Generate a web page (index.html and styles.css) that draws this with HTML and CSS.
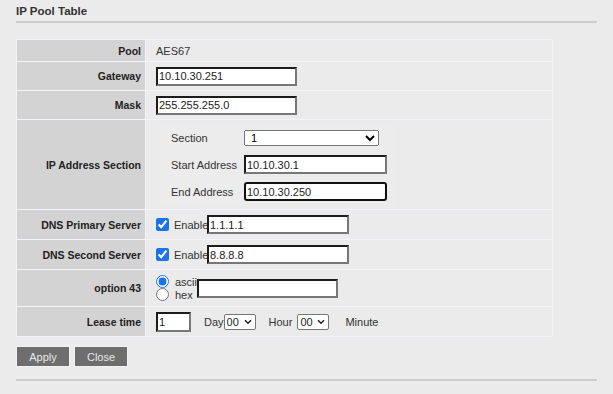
FILE: index.html
```html
<!DOCTYPE html>
<html lang="en">
<head>
  <meta charset="UTF-8">
  <title>IP Pool Table</title>
  <link rel="stylesheet" href="styles.css">
</head>
<body>
  <div class="page">
    <h1 class="title">IP Pool Table</h1>

    <table class="pool-table">
      <tr class="row-pool">
        <td class="label">Pool</td>
        <td class="value">AES67</td>
      </tr>
      <tr class="row-field">
        <td class="label">Gateway</td>
        <td class="value"><input type="text" class="field field-wide" value="10.10.30.251"></td>
      </tr>
      <tr class="row-field">
        <td class="label">Mask</td>
        <td class="value"><input type="text" class="field field-wide" value="255.255.255.0"></td>
      </tr>
      <tr class="row-section">
        <td class="label">IP Address Section</td>
        <td class="value value-nested">
          <table class="section-table">
            <tr>
              <td class="sub-label">Section</td>
              <td class="sub-value">
                <select class="section-select">
                  <option>1</option>
                  <option>2</option>
                  <option>3</option>
                </select>
              </td>
            </tr>
            <tr>
              <td class="sub-label">Start Address</td>
              <td class="sub-value"><input type="text" class="field field-section" value="10.10.30.1"></td>
            </tr>
            <tr>
              <td class="sub-label">End Address</td>
              <td class="sub-value"><input type="text" class="field field-section focused" value="10.10.30.250"></td>
            </tr>
          </table>
        </td>
      </tr>
      <tr class="row-dns">
        <td class="label">DNS Primary Server</td>
        <td class="value">
          <div class="inline">
            <input type="checkbox" class="check" checked>
            <span class="enable">Enable</span><input type="text" class="field field-dns" value="1.1.1.1">
          </div>
        </td>
      </tr>
      <tr class="row-dns">
        <td class="label">DNS Second Server</td>
        <td class="value">
          <div class="inline">
            <input type="checkbox" class="check" checked>
            <span class="enable">Enable</span><input type="text" class="field field-dns" value="8.8.8.8">
          </div>
        </td>
      </tr>
      <tr class="row-option">
        <td class="label">option 43</td>
        <td class="value">
          <div class="inline">
            <div class="radios">
              <label class="radio-line"><input type="radio" name="opt43" class="radio" checked>ascii</label>
              <label class="radio-line"><input type="radio" name="opt43" class="radio">hex</label>
            </div>
            <input type="text" class="field field-option" value="">
          </div>
        </td>
      </tr>
      <tr class="row-lease">
        <td class="label">Lease time</td>
        <td class="value">
          <div class="inline">
            <input type="text" class="field field-lease" value="1">
            <span class="unit unit-day">Day</span>
            <span class="select-wrap">
              <select class="small-select"><option>00</option><option>01</option></select>
              <svg class="chevron" width="8" height="6" viewBox="0 0 8 6"><path d="M1 1.2 L4 4.2 L7 1.2" fill="none" stroke="#222" stroke-width="1.6"/></svg>
            </span>
            <span class="unit unit-hour">Hour</span>
            <span class="select-wrap">
              <select class="small-select"><option>00</option><option>01</option></select>
              <svg class="chevron" width="8" height="6" viewBox="0 0 8 6"><path d="M1 1.2 L4 4.2 L7 1.2" fill="none" stroke="#222" stroke-width="1.6"/></svg>
            </span>
            <span class="unit unit-minute">Minute</span>
          </div>
        </td>
      </tr>
    </table>

    <div class="buttons">
      <button class="btn">Apply</button>
      <button class="btn">Close</button>
    </div>

    <div class="footer-line"></div>
  </div>
</body>
</html>
```

FILE: styles.css
```css
html, body {
  margin: 0;
  padding: 0;
  background: #ebebeb;
}

body {
  font-family: "Liberation Sans", Arial, sans-serif;
  font-size: 11px;
  color: #333;
}

.page {
  width: 581px;
  margin-left: 16px;
}

.title {
  margin: 0;
  padding: 4px 0 3px;
  font-size: 11.5px;
  line-height: 14px;
  font-weight: bold;
  color: #333;
  border-bottom: 2px solid #cdcdcd;
}

.pool-table {
  margin-top: 16px;
  width: 537px;
  border-collapse: separate;
  border-spacing: 1px;
  background: #f3f3f9;
}

.pool-table td {
  padding: 0;
}

.label {
  width: 124px;
  background: #d3d3d3;
  font-weight: bold;
  font-size: 10.5px;
  color: #222;
  text-align: right;
  padding-right: 4px !important;
}

.value {
  background: #ebebeb;
  padding: 0 10px !important;
}

.row-pool td { height: 21px; }
.row-field td { height: 28px; }
.row-section td { height: 89px; }
.row-dns td { height: 29px; }
.row-option td { height: 36px; }
.row-lease td { height: 29px; }

.value-nested {
  padding: 0 0 0 14px !important;
}

.field {
  box-sizing: border-box;
  height: 19px;
  padding: 0 1px;
  font-family: "Liberation Sans", Arial, sans-serif;
  font-size: 11px;
  color: #222;
  background: #fff;
  border-width: 2px;
  border-style: solid;
  border-color: #1c1c1c #777 #777 #1c1c1c;
  border-radius: 0;
  outline: none;
}

.field-wide {
  width: 141px;
}

.field-section {
  width: 143px;
}

.field.focused {
  border-color: #111;
  border-radius: 3px;
}

.field-dns {
  width: 142px;
}

.field-option {
  width: 141px;
}

.field-lease {
  width: 35px;
  height: 20px;
}

.section-table {
  border-collapse: separate;
  border-spacing: 0;
  width: 236px;
  background: #ececec;
}

.pool-table .section-table td {
  padding: 0;
  height: 27px;
}

.pool-table .section-table .sub-label {
  width: 73px;
  padding-left: 11px;
  color: #333;
}

.section-select {
  width: 135px;
  height: 16px;
  font-family: "Liberation Sans", Arial, sans-serif;
  font-size: 11px;
  padding: 0 2px;
}

.select-wrap {
  position: relative;
  display: inline-flex;
}

.small-select {
  appearance: none;
  -webkit-appearance: none;
  box-sizing: border-box;
  width: 32px;
  height: 16px;
  padding: 0 0 0 2px;
  font-family: "Liberation Sans", Arial, sans-serif;
  font-size: 11px;
  color: #222;
  background: #fff;
  border: 1px solid #767676;
  border-radius: 2px;
}

.chevron {
  position: absolute;
  right: 4px;
  top: 5px;
  pointer-events: none;
}

.inline {
  display: flex;
  align-items: center;
}

.check {
  width: 13px;
  height: 13px;
  margin: 0 5px 0 0;
  accent-color: #1a73e8;
}

.enable {
  color: #333;
  width: 33px;
  white-space: nowrap;
}

.radios {
  width: 41px;
  display: flex;
  flex-direction: column;
  white-space: nowrap;
}

.radio-line {
  display: flex;
  align-items: center;
  height: 13px;
  color: #333;
}

.radio {
  width: 13px;
  height: 13px;
  margin: 0 6px 0 0;
  accent-color: #1a73e8;
}

.unit {
  color: #333;
}

.unit-day {
  margin-left: 13px;
}

.unit-hour {
  margin-left: 13px;
  margin-right: 5px;
}

.unit-minute {
  margin-left: 16px;
}

.buttons {
  margin-top: 9px;
  display: flex;
  gap: 4px;
}

.btn {
  width: 54px;
  height: 21px;
  padding: 0;
  background: #6e6e6e;
  color: #e8e8e8;
  border: 1px solid #f2f2f2;
  border-radius: 0;
  font-family: "Liberation Sans", Arial, sans-serif;
  font-size: 11px;
}

.footer-line {
  margin-top: 12px;
  border-top: 2px solid #cdcdcd;
}
```
